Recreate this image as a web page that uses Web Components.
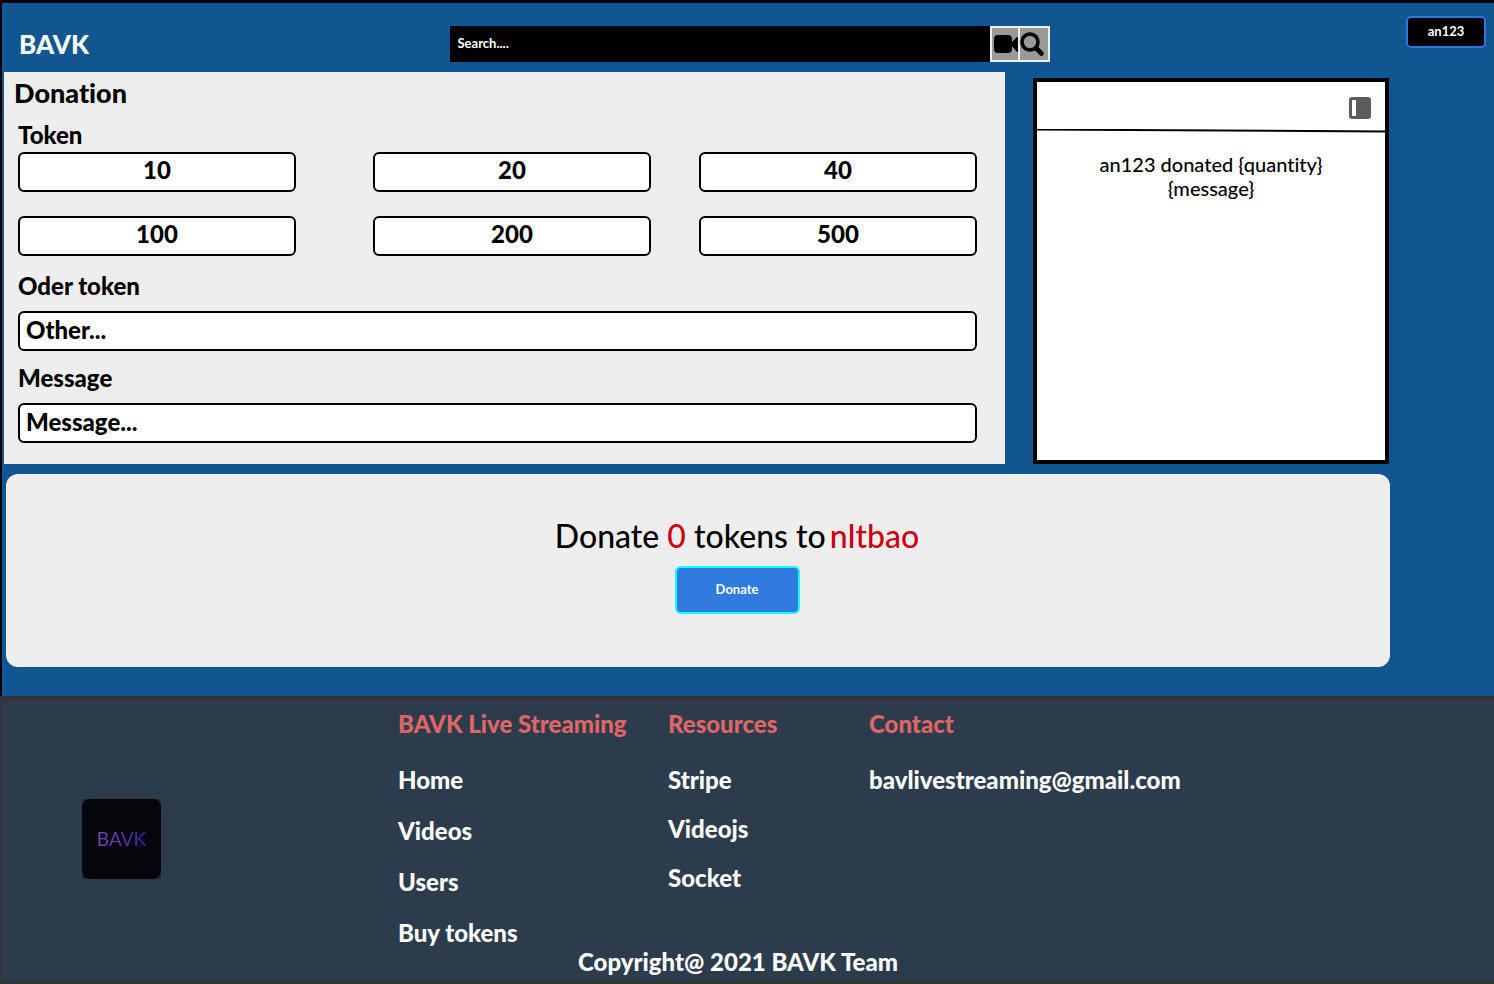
<!DOCTYPE html>
<html lang="en">
<head>
<meta charset="utf-8">
<title>BAVK</title>
<style>
html,body{margin:0;min-height:100%}
body{font-family:Lato,"Open Sans",sans-serif;font-variant-ligatures:none;background:#115591;color:#000}
</style>
</head>
<body>
<bavk-page>
  <bavk-header slot="header" user="an123"></bavk-header>
  <donation-form></donation-form>
  <chat-panel>an123 donated {quantity}<br>{message}</chat-panel>
  <donate-summary slot="summary" amount="0" receiver="nltbao"></donate-summary>
  <bavk-footer slot="footer">
    <footer-column heading="BAVK Live Streaming" style="--gap:23px">
      <footer-link>Home</footer-link><footer-link>Videos</footer-link><footer-link>Users</footer-link><footer-link>Buy tokens</footer-link>
    </footer-column>
    <footer-column heading="Resources">
      <footer-link>Stripe</footer-link><footer-link>Videojs</footer-link><footer-link>Socket</footer-link>
    </footer-column>
    <footer-column heading="Contact">
      <footer-link href="mailto:bavlivestreaming@gmail.com">bavlivestreaming@gmail.com</footer-link>
    </footer-column>
  </bavk-footer>
</bavk-page>
<script>
const define = (name, render) => customElements.define(name, class extends HTMLElement {
  constructor() {
    super();
    this.attachShadow({ mode: 'open' }).innerHTML = '<style>*{box-sizing:border-box}:host{display:block;box-sizing:border-box}</style>' + render(this);
  }
});

define('bavk-page', () => `
<style>
:host{min-height:100vh;display:flex;flex-direction:column}
.top{flex:1;border-top:3px solid #000;border-left:2px solid #000;background:#115591;padding-bottom:29px}
.row{display:flex;gap:28px;padding:0 105px 0 2px}
::slotted(donation-form){flex:1}
::slotted(chat-panel){flex:0 0 356px;margin-top:6px}
::slotted(donate-summary){margin:10px 104px 0 4px}
</style>
<div class="top"><slot name="header"></slot><main class="row"><slot></slot></main><slot name="summary"></slot></div>
<slot name="footer"></slot>`);

define('bavk-header', el => `
<style>
:host{display:grid;grid-template-columns:1fr 600px 1fr;height:69px;padding:0 8px 0 11px}
.brand{align-self:center;color:#fff;font-weight:900;font-size:26px;line-height:36px;text-decoration:none;padding:12px 0 0 6px}
form{display:flex;height:36px;margin-top:23px}
input{flex:1;min-width:0;border:0;border-radius:0;background:#000;color:#fff;padding:0 8px 2px;font:bold 13px Lato,sans-serif;outline:0}
input::placeholder{color:#fff;opacity:1}
form button{width:28px;padding:0;border:2px solid #eee;border-right:0;background:#999;overflow:hidden}
form button.go{width:32px;border-right:2px solid #eee}
svg{display:block}
.user{justify-self:end;margin-top:13px;width:80px;height:32px;border:2px solid #2f77df;border-radius:5px;background:#000;color:#fff;font:bold 13px Lato,sans-serif;padding:0 0 3px}
</style>
<a class="brand" href="#">BAVK</a>
<form>
<input type="text" placeholder="Search...." aria-label="Search">
<button type="button" aria-label="Live video"><svg width="26" height="32" viewBox="0 0 26 32"><rect x="2" y="7" width="18" height="18" rx="4"/><path d="M18 16 25 9h2v15h-2z"/></svg></button>
<button type="button" class="go" aria-label="Search"><svg width="28" height="32" viewBox="0 0 28 32" fill="none" stroke="#000"><circle cx="10" cy="14" r="8" stroke-width="3.6"/><path d="m16 20 5.500 5.500" stroke-width="4.600" stroke-linecap="round"/></svg></button>
</form>
<button class="user" type="button">${el.getAttribute('user')}</button>`);

define('token-button', () => `
<style>
button{display:block;width:100%;height:40px;border:2px solid #000;border-radius:6px;background:#fff;color:#000;font:900 24px/28px Lato,sans-serif;padding:0 0 4px}
</style><button type="button"><slot></slot></button>`);

define('text-field', el => `
<style>
label{display:block;font-size:24px;line-height:28px;font-weight:900;margin-bottom:11px}
input{display:block;width:100%;height:40px;border:2px solid #000;border-radius:6px;background:#fff;color:#000;font:900 24px/28px Lato,sans-serif;padding:0 6px 4px;outline:0}
input::placeholder{color:#000;opacity:1}
</style><label for="f">${el.getAttribute('label')}</label><input id="f" type="text" placeholder="${el.getAttribute('hint')}">`);

define('donation-form', () => `
<style>
:host{background:#eee;padding:3px 28px 21px 14px}
h1{margin:0 0 10px -4px;font-size:27px;line-height:36px;font-weight:900}
h2{margin:0 0 3px;font-size:24px;line-height:28px;font-weight:900}
.grid{display:grid;grid-template-columns:1fr 77px 1fr 48px 1fr;row-gap:24px;margin-bottom:16px}
token-button:nth-child(3n+1){grid-column:1}
token-button:nth-child(3n+2){grid-column:3}
token-button:nth-child(3n){grid-column:5}
text-field + text-field{margin-top:13px}
</style>
<h1>Donation</h1><h2>Token</h2>
<div class="grid"><token-button>10</token-button><token-button>20</token-button><token-button>40</token-button><token-button>100</token-button><token-button>200</token-button><token-button>500</token-button></div>
<text-field label="Oder token" hint="Other..."></text-field>
<text-field label="Message" hint="Message..."></text-field>`);

define('chat-panel', () => `
<style>
:host{background:#fff;border:4px solid #000}
header{display:flex;justify-content:flex-end;height:47px;padding:14px 13px 0 0}
button{width:24px;height:24px;padding:0;border:0;background:none}
svg{display:block}
.rule{width:100%;height:4px}
p{margin:19px 0 0;font-size:20px;line-height:24px;font-weight:500;text-align:center}
</style>
<header><button type="button" aria-label="Toggle panel"><svg width="24" height="24"><rect x="1" y="1" width="22" height="22" rx="3" fill="#5c5c5c"/><rect x="4" y="4" width="4" height="16" rx="1" fill="#fff"/></svg></button></header>
<svg class="rule" viewBox="0 0 348 4" preserveAspectRatio="none"><path d="M0 .5 348 2.500" stroke="#000" stroke-width="2"/></svg>
<p><slot></slot></p>`);

define('donate-summary', el => `
<style>
:host{background:#eee;border-radius:12px;height:193px;padding:42px 0 0 78px;text-align:center}
p{margin:0 0 10px;font-size:32px;line-height:40px;font-weight:500}
b{font-weight:500;color:#cc0011}
b + b{margin-left:-4px}
button{width:125px;height:48px;border:2px solid #1ff;border-radius:6px;background:#307ae0;color:#fff;font:bold 13px Lato,sans-serif;padding:0 0 2px}
</style>
<p>Donate <b>${el.getAttribute('amount')}</b> tokens to <b>${el.getAttribute('receiver')}</b></p>
<button type="button">Donate</button>`);

define('footer-link', el => `
<style>a{display:block;color:#fff;text-decoration:none;font-size:24px;line-height:28px;font-weight:900;white-space:nowrap}</style>
<a href="${el.getAttribute('href') || '#'}"><slot></slot></a>`);

define('footer-column', el => `
<style>
h2{margin:0 0 28px;color:#e06666;font-size:24px;line-height:28px;font-weight:900;white-space:nowrap}
nav{display:flex;flex-direction:column;gap:var(--gap,21px)}
</style><h2>${el.getAttribute('heading')}</h2><nav><slot></slot></nav>`);

define('bavk-footer', () => `
<style>
:host{background:#2c3c4c;border:solid #333;border-width:4px 0 3px 2px;height:288px}
.cols{display:grid;grid-template-columns:316px 270px 201px 1fr;padding:10px 0 0 80px;height:248px}
.logo{width:79px;height:80px;margin-top:89px;background:#22283b;display:flex}
.logo span{flex:1;display:grid;place-items:center;border-radius:8px;background:#05060c;font-size:19px;line-height:20px}
.logo i{font-style:normal;color:transparent;background:linear-gradient(90deg,#6c4cae,#3f1da4);background-clip:text}
small{display:block;padding-right:20px;text-align:center;color:#fff;font-size:24px;line-height:28px;font-weight:900}
</style>
<div class="cols"><div class="logo"><span><i>BAVK</i></span></div><slot></slot></div>
<small>Copyright@ 2021 BAVK Team</small>`);
</script>
</body>
</html>
